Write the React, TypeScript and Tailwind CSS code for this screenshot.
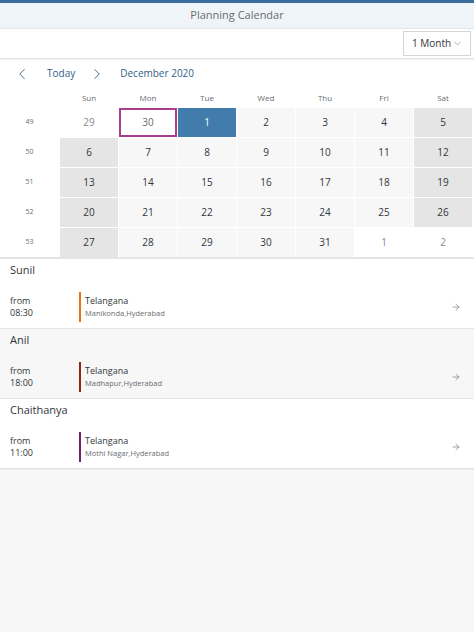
import { ChevronLeft, ChevronRight, ChevronDown, ArrowRight } from "lucide-react";

type Day = { n: number; kind: "week" | "weekend" | "other" | "today" | "selected" };

const weeks: { no: number; days: Day[] }[] = [
  {
    no: 49,
    days: [
      { n: 29, kind: "other" },
      { n: 30, kind: "today" },
      { n: 1, kind: "selected" },
      { n: 2, kind: "week" },
      { n: 3, kind: "week" },
      { n: 4, kind: "week" },
      { n: 5, kind: "weekend" },
    ],
  },
  ...[50, 51, 52].map((no, i) => ({
    no,
    days: [6, 7, 8, 9, 10, 11, 12].map((d, j) => ({
      n: d + i * 7,
      kind: (j === 0 || j === 6 ? "weekend" : "week") as Day["kind"],
    })),
  })),
  {
    no: 53,
    days: [
      { n: 27, kind: "weekend" },
      { n: 28, kind: "week" },
      { n: 29, kind: "week" },
      { n: 30, kind: "week" },
      { n: 31, kind: "week" },
      { n: 1, kind: "other" },
      { n: 2, kind: "other" },
    ],
  },
];

const cellClass: Record<Day["kind"], string> = {
  week: "bg-[#f7f7f7] text-[#32363a]",
  weekend: "bg-[#e5e5e5] text-[#32363a]",
  other: "bg-white text-[#8a8b8c]",
  today: "bg-white text-[#6a6d70] border-2 border-[#a93e8f]",
  selected: "bg-[#427cac] text-white",
};

const people = [
  { name: "Sunil", time: "08:30", place: "Manikonda,Hyderabad", color: "bg-[#e9730c]", bg: "bg-white" },
  { name: "Anil", time: "18:00", place: "Madhapur,Hyderabad", color: "bg-[#8d2a0b]", bg: "bg-[#f7f7f7]" },
  { name: "Chaithanya", time: "11:00", place: "Mothi Nagar,Hyderabad", color: "bg-[#7a1e6c]", bg: "bg-white" },
];

export default function App() {
  return (
    <div className="min-h-[632px] flex flex-col bg-[#f7f7f7] font-['Open_Sans','Noto_Sans',sans-serif] text-[#32363a]">
      {/* Header */}
      <div className="h-[3px] bg-[#3a6d9b]" />
      <div className="h-[26px] bg-[#eff4f9] border-b border-[#e1e6eb] flex items-center justify-center text-[11px] text-[#6a6d70]">
        Planning Calendar
      </div>

      <div className="bg-white">
        {/* Toolbar */}
        <div className="h-[30px] flex items-center justify-end pr-[3px] border-b border-[#e5e5e5] shadow-[0_1px_1px_rgba(0,0,0,0.06)]">
          <div className="w-[68px] h-[25px] border border-[#d5d5d5] flex items-center justify-between pl-[8px] pr-[7px] text-[10px]">
            <span>1 Month</span>
            <ChevronDown size={11} strokeWidth={1.2} className="text-[#6a6d70]" />
          </div>
        </div>

        {/* Navigation */}
        <div className="h-[29px] flex items-center text-[10px] text-[#346187]">
          <ChevronLeft size={18} strokeWidth={1.2} className="ml-[13px]" />
          <span className="ml-[16px]">Today</span>
          <ChevronRight size={18} strokeWidth={1.2} className="ml-[13px]" />
          <span className="ml-[14px]">December 2020</span>
        </div>

        {/* Calendar */}
        <div className="grid grid-cols-[59px_repeat(7,58px)] gap-px">
          <div />
          {["Sun", "Mon", "Tue", "Wed", "Thu", "Fri", "Sat"].map((d) => (
            <div key={d} className="h-[19px] flex items-center justify-center text-[8px] text-[#6a6d70]">
              {d}
            </div>
          ))}
          {weeks.map((w) => (
            <>
              <div key={"w" + w.no} className="h-[29px] flex items-center justify-center text-[7px] text-[#6a6d70]">
                {w.no}
              </div>
              {w.days.map((d, i) => (
                <div
                  key={w.no + "-" + i}
                  className={"h-[29px] flex items-center justify-center text-[10px] " + cellClass[d.kind]}
                >
                  {d.n}
                </div>
              ))}
            </>
          ))}
        </div>
      </div>

      {/* Appointments */}
      <div className="border-t-2 border-[#e5e5e5]">
        {people.map((p) => (
          <div key={p.name} className={p.bg + " border-b border-[#e5e5e5]"}>
            <div className="h-[22px] flex items-center pl-[10px] text-[11px]">{p.name}</div>
            <div className="h-[47px] pt-[5px] flex items-center">
              <div className="w-[79px] pl-[10px] text-[9px] leading-[12px]">
                <div>from</div>
                <div>{p.time}</div>
              </div>
              <div className={"w-[2px] h-[30px] " + p.color} />
              <div className="ml-[4px] flex-1 leading-[12px]">
                <div className="text-[9px]">Telangana</div>
                <div className="text-[7.5px] text-[#6a6d70]">{p.place}</div>
              </div>
              <ArrowRight size={10} strokeWidth={1.5} className="mr-[13px] text-[#6a6d70]" />
            </div>
          </div>
        ))}
      </div>
      <div className="flex-1 bg-[#f7f7f7] border-t border-[#ececec]" />
    </div>
  );
}
